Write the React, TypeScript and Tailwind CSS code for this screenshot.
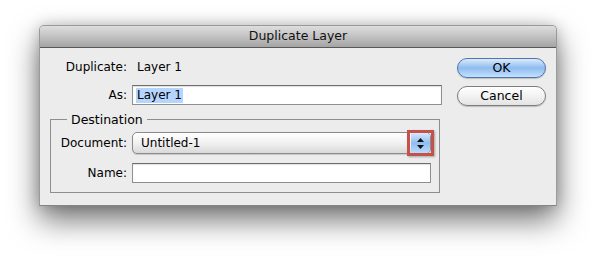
import React from "react";

const font = { fontFamily: '"DejaVu Sans", "Liberation Sans", sans-serif' };

export default function App() {
  return (
    <div className="w-[596px] h-[260px] bg-white pt-[25px] pl-[39px]" style={font}>
      <div className="w-[518px] h-[181px] flex flex-col rounded-t-[5px] border border-[#9a9a9a] border-b-[#858585] bg-[#ececec] shadow-[0_14px_30px_rgba(0,0,0,0.55),0_0_14px_rgba(0,0,0,0.18)] text-[12px] text-black">
        {/* title bar */}
        <div className="h-[22px] shrink-0 rounded-t-[4px] bg-gradient-to-b from-[#dedede] via-[#c2c2c2] to-[#a4a4a4] border-b border-[#585858] flex items-center justify-center text-[12.5px] text-[#111]">
          Duplicate Layer
        </div>
        {/* body */}
        <div className="flex pt-[9px]">
          {/* left column */}
          <div className="w-[402px] flex flex-col">
            <div className="h-[20px] flex items-center">
              <span className="w-[87px] text-right">Duplicate:</span>
              <span className="ml-[10px]">Layer 1</span>
            </div>
            <div className="h-[20px] mt-[8px] flex items-center">
              <span className="w-[87px] text-right">As:</span>
              <div className="ml-[5px] flex-1 h-[20px] bg-white border border-[#8f8f8f] border-t-[#6d6d6d] shadow-[inset_0_1px_1px_rgba(0,0,0,0.12)] flex items-center pl-[3px]">
                <span className="bg-[#b5d5ff] leading-[15px] px-[1px]">Layer 1</span>
              </div>
            </div>
            {/* group box */}
            <fieldset className="ml-[10px] mt-[7px] w-[390px] h-[81px] border border-[#8e8e8e] pb-[9px]">
              <legend className="ml-[16px] px-[4px] text-[12.5px] leading-[15px]">Destination</legend>
              <div className="flex flex-col pt-[5px]">
                <div className="h-[22px] flex items-center">
                  <span className="w-[76px] text-right">Document:</span>
                  <div className="relative ml-[5px] w-[299px] h-[22px] flex rounded-[5px] border border-[#8a8a8a] bg-gradient-to-b from-white via-[#f1f1f1] to-[#d9d9d9] shadow-[0_1px_1px_rgba(0,0,0,0.15)]">
                    <div className="flex-1 flex items-center pl-[8px]">Untitled-1</div>
                    <div className="w-[19px] h-full rounded-r-[4px] bg-gradient-to-b from-[#d8e8fb] via-[#8fbdf0] to-[#b9dafd] flex flex-col items-center justify-center gap-[3px]">
                      <svg width="7" height="4" viewBox="0 0 7 4"><path d="M3.5 0L7 4H0z" fill="#111" /></svg>
                      <svg width="7" height="4" viewBox="0 0 7 4"><path d="M0 0H7L3.5 4z" fill="#111" /></svg>
                    </div>
                    <div className="absolute -right-[4px] -top-[3px] w-[27px] h-[26px] border-[3px] border-[#c4524a] shadow-[1px_1px_2px_rgba(0,0,0,0.3)]" />
                  </div>
                </div>
                <div className="h-[20px] mt-[9px] flex items-center">
                  <span className="w-[76px] text-right">Name:</span>
                  <div className="ml-[5px] w-[299px] h-[20px] bg-white border border-[#8f8f8f] border-t-[#6d6d6d] shadow-[inset_0_1px_1px_rgba(0,0,0,0.12)]" />
                </div>
              </div>
            </fieldset>
          </div>
          {/* buttons */}
          <div className="ml-[15px] flex flex-col pt-[1px]">
            <button className="w-[89px] h-[20px] rounded-full border border-[#4f76ad] bg-gradient-to-b from-[#dcebfc] via-[#8ebcf0] to-[#c5e1fe] shadow-[0_1px_1px_rgba(0,0,0,0.2)] text-[12.5px] leading-none">
              OK
            </button>
            <button className="mt-[8px] w-[89px] h-[20px] rounded-full border border-[#7e7e7e] bg-gradient-to-b from-white via-[#f2f2f2] to-[#e4e4e4] shadow-[0_1px_1px_rgba(0,0,0,0.2)] text-[12.5px] leading-none">
              Cancel
            </button>
          </div>
        </div>
      </div>
    </div>
  );
}
